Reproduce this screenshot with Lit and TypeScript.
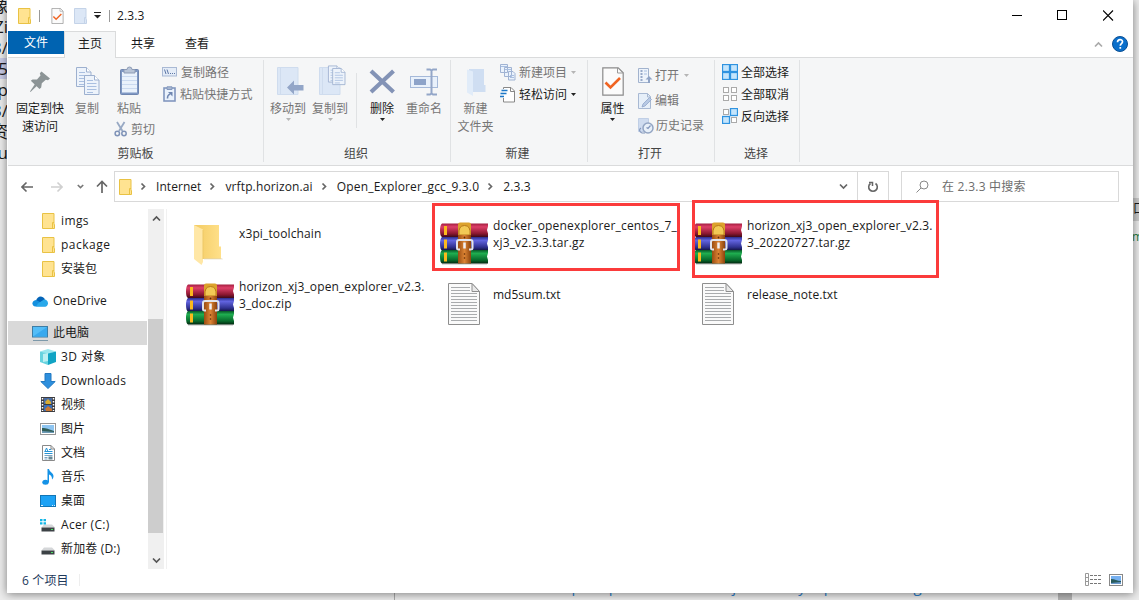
import { LitElement, html, svg, css, type TemplateResult } from "lit";
import { customElement } from "lit/decorators.js";

const icon = (w: number, h: number, body: TemplateResult) =>
  html`<svg width=${w} height=${h} viewBox="0 0 ${w} ${h}" fill="none">${body}</svg>`;

const folder = (w: number, h: number, fill = "#ffe391", edge = "#e9c244") =>
  html`<svg width=${w} height=${h} viewBox="0 0 13 16" fill="none">
    <path d="M.5.5h11.500v11h.5v4H.5z" fill=${fill} stroke=${edge} />
    <path d="M10.500 15.500V9.500h1.500" stroke=${edge} />
  </svg>`;

const caret = (color = "#222") =>
  html`<svg class="caret" width="5" height="3" viewBox="0 0 5 3"><path d="M0 0h5L2.500 3z" fill=${color} /></svg>`;

const chevron = (dir: string, color = "#666") => {
  const d: Record<string, string> = {
    right: "M2.500 1.500 5.500 4.500 2.500 7.500",
    down: "M1 2.500 4.500 6 8 2.500",
    up: "M1 6.500 4.500 3 8 6.500",
  };
  return html`<svg width="9" height="9" viewBox="0 0 9 9"><path d=${d[dir]} fill="none" stroke=${color} stroke-width="1.700" /></svg>`;
};

const pin = icon(32, 32, svg`<g fill="#8c9496"><path d="M17.500 6.500 26 13.500 24 15.200 21.800 14.800 17.800 18.200 17.200 22.500 15.500 24 6.800 15.800 8.500 14.400 13 14.400 16.500 10.500 15.800 8.300z"/><path d="M11.300 18.500 13.300 20.500 6.500 27 6 26.500z"/></g>`);

const sheet = (x: number, y: number) => svg`<g transform="translate(${x} ${y})">
  <path d="M.5.5h10l4.500 4.500v14.500H.5z" fill="#edf3fb" stroke="#9db0cf"/>
  <path d="M10.500.5V5H15" stroke="#9db0cf" fill="#fff"/>
  <path d="M3 5.500h6M3 8.500h9.500M3 11.500h9.500M3 14.500h9.500M3 17.500h6" stroke="#a9bfe0"/></g>`;

const copy = icon(32, 32, svg`${sheet(5, 2)}${sheet(13, 10)}`);
const paste = icon(32, 32, svg`<rect x="7.500" y="4.500" width="18" height="25" rx="1" fill="#7f98c4" stroke="#6f86b0"/>
  <rect x="9" y="7" width="15" height="20.500" fill="#eaf2fc"/><path d="M11 4.500h3a2.500 2.500 0 0 1 5 0H22v3.500H11z" fill="#b9c5d8" stroke="#8d9bb5"/>
  <path d="M9 11.500h15M9 15.500h15M9 19.500h15M9 23.500h15" stroke="#cbdaf0"/>`);
const cut = icon(14, 16, svg`<path d="M3 1l5.500 9M10.500 1 5 10" stroke="#98a9c4" stroke-width="1.800"/><circle cx="3.300" cy="12.500" r="2.200" stroke="#7f93b8" stroke-width="1.500"/><circle cx="10" cy="12.500" r="2.200" stroke="#7f93b8" stroke-width="1.500"/>`);
const pathIcon = icon(15, 10, svg`<rect x=".5" y=".5" width="14" height="8.500" fill="#e4ecf7" stroke="#a9b9d4"/><path d="M2.500 2.500 4 7M5 2.500 6.500 7" stroke="#5d77a6"/><path d="M8 6.500h1M10 6.500h1M12 6.500h1" stroke="#5d77a6"/>`);
const shortcut = icon(13, 16, svg`<rect x="1" y="2" width="11" height="13" fill="#eaf2fc" stroke="#8297be" stroke-width="1.600"/><path d="M4 .8h5v2.700H4z" fill="#aab9d1" stroke="#8297be"/><path d="M4.500 12.500c0-3 .5-3.500 2.500-4.500" stroke="#6f86b0" stroke-width="1.600"/><path d="M5 6h4.500v4.500z" fill="#6f86b0"/>`);

const blueFolder = svg`<path d="M5.500 2.500h20.500v27h-20.500z" fill="#dce7f6" stroke="#cfdcee"/><path d="M8.500 3v26" stroke="#cfdcee"/>`;
const moveTo = icon(32, 32, svg`${blueFolder}<path d="M15 22.500 22 15.500V20h9.500v5.500H22v4z" fill="#93a6c8"/>`);
const copyTo = icon(32, 32, svg`${blueFolder}<g transform="translate(14 .5) scale(.85)">${sheet(0, 0)}${sheet(5, 3)}</g>`);
const remove = icon(32, 32, svg`<path d="M5 6 27.500 27M27.500 6 5 27" stroke="#8393b6" stroke-width="4.200"/>`);
const rename = icon(32, 32, svg`<rect x="2.500" y="11.500" width="27" height="11" fill="#e9f1fb" stroke="#a5b9d9"/><rect x="6" y="14" width="12" height="6" fill="#8da3c9"/><path d="M18.500 4.500h3.500l1.500 1 1.500-1H29M23.500 5v24M18.500 29.500h3.500l1.500-1 1.500 1H29" stroke="#93a6c8" stroke-width="2"/>`);
const newFolder = icon(32, 32, svg`<path d="M9 4h15v16h1.500v7H9z" fill="#cfdef2"/><path d="M7 4.500 13 6.500V31L7 27.500z" fill="#e1ecf9"/>`);
const newItem = icon(16, 17, svg`<g stroke="#a0b3d3" fill="#eaf2fc"><path d="M.5.5h7v8h-7zM4.500 3.500h7v9h-7zM8.500 7.500h4.500l2 2v6.500H8.500z"/></g><path d="M1 2.500h6M5 5.500h6M10 11.500h4M10 13.500h4" stroke="#a9bfe0"/>`);
const easy = icon(16, 17, svg`<path d="M3.500 1.500h7.500l3.500 3.500v11h-11z" fill="#fff"/><path d="M3.500 3V1.500h7.500l3.500 3.500v11h-11V12M10.500 1.500v4h4" stroke="#888"/><path d="M1.500 4.500h6M.5 7.500h6M0 10.500h4" stroke="#1e78c8" stroke-width="1.300"/>`);
const check = (w: number, h: number) => html`<svg width=${w} height=${h} viewBox="0 0 22 29" fill="none"><path d="M.8.8h15.400L21.200 5.800V28.200H.8z" fill="#fbfbfb" stroke="#8b8b8b" stroke-width="1.200"/><path d="M15.500.8V6H21" stroke="#999"/><path d="M3.500 15.500 8.500 20.500 18 11" stroke="#f06422" stroke-width="2.600"/></svg>`;
const openIcon = icon(15, 16, svg`<path d="M.5.5h10v14H.5z" fill="#edf3fb" stroke="#a2b3ce"/><path d="M2.500 3h2M2.500 6h2M2.500 9h2M2.500 12h2" stroke="#7c92b9" stroke-width="1.500"/><path d="M6 3h3M6 6h3" stroke="#a9bfe0"/><path d="M10 15V11.500H7.500L11 8l3.500 3.500H12V15z" fill="#8fa3c6"/>`);
const edit = icon(15, 16, svg`<path d="M.5.5h9l3 3v12H.5z" fill="#e6eff9" stroke="#a8b9d3"/><path d="M9.500.5v3.500h3" stroke="#a8b9d3"/><path d="M4 14l1-3L11.500 4.500 13.500 6.500 7 13z" fill="#b7c9e4" stroke="#91a6ca" stroke-width=".8"/>`);
const history = icon(16, 16, svg`<path d="M.5.5h10v13H.5z" fill="#cfdcf0" stroke="#c0cfe6"/><circle cx="10" cy="10" r="5" fill="#e8f0f9" stroke="#93a5c3" stroke-width="1.500"/><path d="M12.500 7.500 10 10.500 8.500 9.500M3 10c-2 1-2 4 1 5h3" stroke="#8095bc" stroke-width="1.200"/>`);

const tile = (x: number, y: number, on: boolean, s = 6) =>
  svg`<rect x=${x + 0.5} y=${y + 0.5} width=${s - 1} height=${s - 1} fill=${on ? "#c5e5fc" : "#fff"} stroke=${on ? "#2f93e0" : "#aaa"} stroke-width=${on ? 1.300 : 1}/>`;
const selAll = icon(16, 16, svg`${tile(0, 0, true, 8)}${tile(8, 0, true, 8)}${tile(0, 8, true, 8)}${tile(8, 8, true, 8)}`);
const selNone = icon(16, 16, svg`${tile(1, 1, false)}${tile(9, 1, false)}${tile(1, 9, false)}${tile(9, 9, false)}`);
const selInv = icon(16, 16, svg`${tile(1, 1, false)}${tile(8, 0, true, 8)}${tile(0, 8, true, 8)}${tile(9, 9, false)}`);

const cloud = icon(17, 12, svg`<path d="M4 6C5 1.500 10-.5 13 4.500L8 8z" fill="#0364b8"/><path d="M3.500 11.500C-.8 11-.5 5.500 4 5l6 3 4 3.500z" fill="#1490df"/><path d="M6 8.500 12 4.500c4-.5 5.500 5 2 7H4z" fill="#28a8ea"/>`);
const pc = icon(16, 16, svg`<rect x=".5" y="1.500" width="15" height="10.500" fill="#54bdf7" stroke="#3d7da5"/><path d="M1 11.500 15 2v9.500z" fill="#38a9ee"/><path d="M1 15.500h15" stroke="#7d99aa"/>`);
const cube = icon(16, 16, svg`<path d="M0 2.500 8 0l8 2.500L8 5z" fill="#9be7ee"/><path d="M0 2.500 8 4.500V16L0 13z" fill="#67d3df"/><path d="M8 4.500l8-2V13L8 16z" fill="#11a4c4"/><path d="M3 5 8 4v8l-5 1z" fill="#bdf0f2"/>`);
const down = icon(16, 16, svg`<path d="M5 .5h6v8h4.200L8 15.500.8 8.500H5z" fill="#2d8fdd" stroke="#2379c2"/>`);
const film = icon(14, 16, svg`<path d="M0 0h14v15H0z" fill="#3c3c40"/><path d="M3 1h8v6H3z" fill="#486ca4"/><path d="M3 8h8v6H3z" fill="#356ebc"/><path d="M4 5l3-3 3 3v2H5z" fill="#d9ac32"/><path d="M4 12l3-3 4 3v2H5z" fill="#c77734"/><path d="M1.500 1v13M12.500 1v13" stroke="#fff" stroke-width="1.500" stroke-dasharray="1.500 1.500"/>`);
const photo = icon(16, 12, svg`<rect x=".5" y=".5" width="15" height="11" fill="#fff" stroke="#969696"/><path d="M2 2h12v8H2z" fill="#8ec5f1"/><path d="M2 5c5 0 6 1 12 3v2H2z" fill="#315e58"/><path d="M2 8l12 1v1H2z" fill="#6d9bb6"/>`);
const doc = icon(13, 16, svg`<path d="M.5.5h8.500l3.500 3.500v11.500H.5z" fill="#fff" stroke="#898989"/><path d="M9 .5V4h3.500" stroke="#898989"/><path d="M3 6.500 4.500 3l1.500 3.500M7 4.500h2M2.500 6.500h8M2.500 8.500h8" stroke="#2794d5"/><path d="M2.500 10.500h8M2.500 12.500h3M2.500 14h3" stroke="#7ba4c2"/><path d="M6.500 11.500h4v3h-4z" fill="#668896"/>`);
const music = icon(12, 16, svg`<ellipse cx="3.500" cy="13.300" rx="3.200" ry="2.500" fill="#1592e6"/><path d="M5.500 13V0h1.500c.5 3 4.500 4 4.500 7 0 1.500-.5 2.500-1.500 3.500 .3-3-1.500-4.500-3-5v8z" fill="#1592e6"/>`);
const desktop = icon(16, 12, svg`<rect x=".5" y=".5" width="15" height="11" fill="#1ca2f5" stroke="#1275b5"/><path d="M1 10.500h2M12 10.500h1M14 10.500h1" stroke="#d8f0ff"/>`);
const disk = svg`<path d="M1.500 8.500 4 5.500h8l3 3z" fill="#d5d7d9"/><path d="M1.500 8.500h13v4h-13z" fill="#3d4246"/><path d="M11 10.500h2" stroke="#4ade62"/>`;
const driveC = icon(16, 14, svg`<g transform="translate(0 1)">${disk}</g><path d="M0 1h2.500v2.300H0zM3.500 1h2.500v2.300H3.500zM0 4.200h2.500v2.300H0zM3.500 4.200h2.500v2.300H3.500z" fill="#12b5e6"/>`);
const driveD = icon(16, 14, svg`${disk}`);

const bigFolder = icon(48, 48, svg`<defs><linearGradient id="f" x2="1"><stop stop-color="#f3cb62"/><stop offset="1" stop-color="#ffe08a"/></linearGradient></defs>
  <path d="M8 6h25v21.500h2V40H8z" fill="url(#f)"/><path d="M8 6 17 10.500V43l-1.500 3L8 40z" fill="#ffe7a6"/><path d="M17 11v29" stroke="#edc866"/><path d="M18 40.500h19l-1-1.500H18z" fill="#ddd0ac" opacity=".5"/>`);
const textFile = icon(32, 42, svg`<path d="M.5.5h23.500l7.500 8v33H.5z" fill="#fafafa" stroke="#8e8e8e"/><path d="M24 .5V8.500h7.500z" fill="#e9e9e9" stroke="#8e8e8e"/>
  <path d="M3 4.500h19M3 7.500h19M3 10.500h26M3 13.500h26M3 16.500h26M3 19.500h26M3 22.500h26M3 25.500h26M3 28.500h26M3 31.500h26M3 34.500h26M3 37.500h26" stroke="#a9abad"/>`);

const book = (y: number, id: string) => svg`<path d="M2 ${y}h46v3l-1 3.500 1 3.500v3.500H2q-2-1-2-6.500t2-7z" fill="url(#${id})"/>
  <path d="M4 ${y + 2.5}h3v9H4z" fill="#fbb91d"/>`;
const grad = (id: string, a: string, b: string, c: string, d: string) =>
  svg`<linearGradient id=${id} x2="0" y2="1"><stop stop-color=${a}/><stop offset=".25" stop-color=${b}/><stop offset=".75" stop-color=${c}/><stop offset="1" stop-color=${d}/></linearGradient>`;
const winrar = icon(48, 43, svg`<defs>${grad("r", "#a31e40", "#dd3f68", "#8a1730", "#3c0a18")}${grad("b", "#2b2c8c", "#6264e0", "#30318f", "#11123e")}${grad("g", "#075727", "#1fae50", "#07692b", "#02260f")}
  <linearGradient id="l" x2="1"><stop stop-color="#9a4d12"/><stop offset=".5" stop-color="#dc8434"/><stop offset="1" stop-color="#8b430d"/></linearGradient></defs>
  <path d="M2 42h45" stroke="#bbb"/>${book(1.5, "r")}${book(15, "b")}${book(28, "g")}
  <path d="M18 2.500q0-2 2-2h9q2 0 2 2v11H18z" fill="#dca22c"/><path d="M19 13q-1-9.500 5.500-9.500T30 13z" fill="#f2c955" stroke="#b87819"/>
  <path d="M18 13h13v28.500H18z" fill="url(#l)"/><circle cx="24.500" cy="15.500" r=".9" fill="#5b2a07"/><circle cx="24.500" cy="32" r=".8" fill="#5b2a07"/><circle cx="24.500" cy="36" r=".8" fill="#5b2a07"/>
  <path d="M19 18h11.500q2 0 2 2v6q0 1.500-2 1.500H29M20 27.500h-1.500q-1.500 0-1.500-1.500v-6q0-2 2-2" stroke="#e2e4ea" stroke-width="2"/><path d="M24.500 20.500v6" stroke="#f0f0f4" stroke-width="2.500"/>`);

/* label with optional tracking, in px */
const t = (s: string, track = 0) => html`<span class="t" style="letter-spacing:${track}px">${s}</span>`;

@customElement("app-root")
export class AppRoot extends LitElement {
  static styles = css`
    :host { display: block; position: relative; width: 1139px; height: 600px; overflow: hidden; background: #ececec;
      font: 12px/17px "Open Sans", "Noto Sans CJK SC", sans-serif; color: #1a1a1a; }
    * { box-sizing: border-box; }
    svg { display: block; flex: none; }
    .t { white-space: nowrap; }
    .behind { position: absolute; inset: 0; font-size: 17px; line-height: 21px; }
    .left { position: absolute; left: -11px; top: -5px; width: 19px; }
    .left div { height: 21px; white-space: nowrap; display: flex; justify-content: flex-end; }
    .left .hl { background: #c9cce8; }
    .right { position: absolute; right: 0; top: 198px; width: 6px; height: 23px; background: #c9c9c9; overflow: hidden; font-size: 12px; }
    .green { position: absolute; right: -4px; top: 226px; font-size: 12px; color: #237a3b; }
    .below { position: absolute; left: 394px; top: 593px; right: 67px; height: 7px; border-left: 1px solid #aaa; border-right: 14px solid #b5b5b5; overflow: hidden; }
    .below span { display: block; margin: -17px 0 0 153px; letter-spacing: 1.200px; color: #2d80cd; font-size: 15px; white-space: nowrap; }
    .win { position: relative; margin-left: 7px; width: 1126px; height: 593px; background: #fff; display: flex; flex-direction: column; box-shadow: 0 1px 9px rgba(0,0,0,.48); padding-left: 1px; }
    .title { height: 31px; display: flex; align-items: center; padding-left: 10px; flex: none; }
    .quick { display: flex; align-items: center; height: 31px; }
    .vb { width: 1px; height: 12px; background: #999; }
    .v1 { margin: 0 11px 0 8px; }
    .qf { margin: 0 7px 0 10px; }
    .qd { margin-right: 8px; }
    .name { margin-left: 7px; }
    .caps { margin-left: auto; display: flex; gap: 35px; padding-right: 19px; }
    .tabs { display: flex; height: 26px; flex: none; }
    .tab { display: grid; place-items: center; height: 26px; width: 54px; padding-bottom: 2px; }
    .file { width: 56px; height: 23px; background: #0063b1; color: #fff; padding: 0; }
    .home { width: 52px; border: 1px solid #dadbdc; border-bottom: 0; background: #f5f6f7; height: 27px; z-index: 1; padding-bottom: 3px; }
    .help { margin-left: auto; display: flex; align-items: center; gap: 9px; padding-right: 5px; }
    .ribbon { height: 109px; flex: none; display: flex; background: #f5f6f7; border: solid #dadbdc; border-width: 1px 0; }
    .group { height: 102px; margin-top: 2px; border-right: 1px solid #e0e2e4; display: flex; flex-direction: column; justify-content: space-between; }
    .body { display: flex; height: 84px; }
    .cap { text-align: center; color: #444; line-height: 18px; height: 17px; }
    .big { display: flex; flex-direction: column; align-items: center; padding-top: 5px; white-space: nowrap; height: 84px; }
    .big .lab { text-align: center; line-height: 18px; margin-top: 3px; }
    .dim { color: #757575; }
    .row { display: flex; align-items: center; height: 22px; gap: 4px; }
    .row .caret { margin-left: 1px; }
    .g1 { width: 256px; } .g2 { width: 187px; padding-right: 2px; } .g3 { width: 137px; padding-right: 3px; } .g4 { width: 127px; padding-right: 2px; } .g5 { width: 85px; padding-right: 2px; }
    .w64 { width: 64px; } .w30 { width: 30px; } .w49 { width: 49px; } .w42 { width: 42px; }
    .pastecol { width: 54px; } .pastecol .big { height: 58px; } .pastecol .row { padding-left: 12px; gap: 3px; margin-right: -8px; }
    .side { padding: 1px 0 0 0; }
    .paths { padding-left: 6px; }
    .shift { padding-left: 1px; }
    .g3 .row { gap: 3px; } .g5 .row { gap: 3px; }
    .g2 .body { padding-left: 3px; } .g5 .body { padding-left: 7px; } .props { padding: 2px 0 1px; }
    .bar { display: flex; align-items: center; height: 41px; flex: none; padding-left: 13px; }
    .fwd { margin-left: 18px; } .recent { margin: 0 12px 0 14px; }
    .addr { display: flex; align-items: center; width: 775px; height: 31px; border: 1px solid #d9d9d9; margin-left: 6px; padding-left: 4px; }
    .crumb { display: flex; align-items: center; padding-bottom: 1px; }
    .crumb .c { margin: 1px 8px 0 7px; }
    .drop { margin-left: auto; display: flex; height: 29px; align-items: center; }
    .refresh { width: 31px; height: 29px; border-left: 1px solid #d9d9d9; display: grid; place-items: center; margin-left: 9px; }
    .search { display: flex; align-items: center; width: 218px; height: 31px; border: 1px solid #d9d9d9; margin-left: 12px; padding-left: 14px; gap: 13px; color: #6d6d6d; }
    .main { display: flex; flex: none; height: 362px; padding-top: 2px; }
    .nav { width: 139px; height: 360px; overflow: hidden; }
    .item { display: flex; align-items: center; height: 24px; padding-left: 31px; }
    .item .t { margin-top: -2px; }
    .item.top { padding-left: 23px; }
    .item.sp { margin-top: 8px; }
    .item.on { background: #d9d9d9; }
    .ic { width: 22px; display: flex; justify-content: center; flex: none; padding-right: 4px; }
    .scroll { width: 16px; margin-left: 1px; background: #f0f0f0; display: flex; flex-direction: column; align-items: center; padding: 5px 0 4px; height: 360px; }
    .thumb { width: 15px; align-self: flex-start; height: 214px; background: #cdcdcd; margin-top: 96px; margin-bottom: auto; }
    .edge { width: 1px; background: #f1f1f1; margin-left: 2px; }
    .files { display: grid; grid-template-columns: repeat(3, 254px); grid-auto-rows: 61px; padding: 9px 0 0 19px; height: 140px; }
    .cell { display: flex; height: 48px; }
    .pic { width: 48px; height: 50px; display: flex; align-items: center; justify-content: center; flex: none; }
    .fn { margin-left: 5px; height: 34px; margin-top: -1px; display: flex; flex-direction: column; justify-content: center; }
    .fn.one { margin-top: -2px; }
    .status { display: flex; align-items: center; height: 22px; padding: 0 10px 0 14px; color: #1e395b; }
    .status .div { width: 1px; height: 12px; background: #eee; margin-left: 10px; }
    .views { margin-left: auto; display: flex; gap: 7px; align-items: center; margin-top: -1px; }
    .mark { position: absolute; border: 3px solid #fb3b3b; }
    .m1 { left: 432px; top: 203px; width: 248px; height: 68px; }
    .m2 { left: 692px; top: 200px; width: 247px; height: 78px; }
    .o4 { padding: 3px 0 0 1px; } .o4 .row { height: 25px; gap: 2px; } .o4 .row.dim:last-child { margin-left: 0; }
    .o4 .row .caret { margin-left: 3px; }
    .sepv { width: 1px; height: 55px; background: #e0e2e4; margin: 13px 4px 0 5px; }
  `;

  big(ic: TemplateResult, lines: string[], cls: string, arrow?: string) {
    return html`<div class="big ${cls}">${ic}<div class="lab">${lines.map((l) => html`<div>${l}</div>`)}</div>${arrow ? caret(arrow) : ""}</div>`;
  }
  row(ic: TemplateResult, text: string, dim = false, arrow?: string) {
    return html`<div class="row ${dim ? "dim" : ""}">${ic}<span class="t">${text}</span>${arrow ? caret(arrow) : ""}</div>`;
  }
  nav(ic: TemplateResult, text: string, cls = "", track = 0) {
    return html`<div class="item ${cls}"><span class="ic">${ic}</span>${t(text, track)}</div>`;
  }
  cell(ic: TemplateResult, lines: string[], track = 0) {
    return html`<div class="cell"><div class="pic">${ic}</div><div class="fn ${lines.length === 1 ? "one" : ""}">${lines.map((l) => t(l, track))}</div></div>`;
  }
  crumb(text: string, track = 0) {
    return html`<div class="crumb"><span class="c">${chevron("right")}</span>${t(text, track)}</div>`;
  }

  render() {
    return html`
      <div class="behind">
        <div class="left"><div>像</div><div>Zi</div><div>3/</div><div class="hl">5</div><div>tp</div><div>3/</div><div>资</div><div>u</div></div>
        <div class="right">口</div><div class="green">m</div>
        <div class="below"><span>https://pan.horizon.ai/j3/survey/open.training</span></div>
      </div>
      <div class="win">
        <div class="title">
          <div class="quick">${folder(13, 16)}<span class="vb v1"></span>${check(13, 16)}
            <span class="qf">${folder(13, 16, "#dce7f6", "#c4d3e8")}</span>
            <svg class="qd" width="7" height="7" viewBox="0 0 7 7"><path d="M0 .5h7" stroke="#222"/><path d="M0 3h7L3.500 6.500z" fill="#222"/></svg>
            <span class="vb"></span></div>
          <span class="name">${t("2.3.3", 0.1)}</span>
          <div class="caps">
            ${icon(11, 11, svg`<path d="M1 5.500h10" stroke="#000"/>`)}
            ${icon(11, 11, svg`<rect x=".5" y=".5" width="9" height="9" stroke="#000"/>`)}
            ${icon(11, 11, svg`<path d="M0 .5l10 10M10 .5l-10 10" stroke="#000" stroke-width="1.100"/>`)}
          </div>
        </div>
        <div class="tabs">
          <div class="tab file">文件</div><div class="tab home">主页</div><div class="tab">共享</div><div class="tab">查看</div>
          <div class="help">${chevron("up", "#aaa")}<svg width="16" height="16" viewBox="0 0 16 16"><circle cx="8" cy="8" r="7.500" fill="#0a6fcb" stroke="#0a4f94"/><path d="M5.500 6.300c.1-3.500 5-3.300 5-.6 0 1.800-2.200 1.900-2.200 4M8.300 11v1.800" fill="none" stroke="#fff" stroke-width="1.700"/></svg></div>
        </div>
        <div class="ribbon">
          <div class="group g1"><div class="body">
            ${this.big(pin, ["固定到快", "速访问"], "w64")}
            ${this.big(copy, ["复制"], "w30 dim")}
            <div class="pastecol">${this.big(paste, ["粘贴"], "dim")}${this.row(cut, "剪切", true)}</div>
            <div class="side paths"><div class="row dim">${pathIcon}${t("复制路径")}</div><div class="row dim shift">${shortcut}${t("粘贴快捷方式", 0.1)}</div></div>
          </div><div class="cap">剪贴板</div></div>
          <div class="group g2"><div class="body">
            ${this.big(moveTo, ["移动到"], "w42 dim", "#b5b5b5")}
            ${this.big(copyTo, ["复制到"], "w42 dim", "#b5b5b5")}
            <div class="sepv"></div>
            ${this.big(remove, ["删除"], "w42", "#222")}
            ${this.big(rename, ["重命名"], "w42 dim")}
          </div><div class="cap">组织</div></div>
          <div class="group g3"><div class="body">
            ${this.big(newFolder, ["新建", "文件夹"], "w49 dim")}
            <div class="side">${this.row(newItem, "新建项目", true, "#b5b5b5")}${this.row(easy, "轻松访问", false, "#222")}</div>
          </div><div class="cap">新建</div></div>
          <div class="group g4"><div class="body">
            ${this.big(html`<div class="props">${check(22, 29)}</div>`, ["属性"], "w49", "#222")}
            <div class="o4">${this.row(openIcon, "打开", true, "#b5b5b5")}${this.row(edit, "编辑", true)}${this.row(history, "历史记录", true)}</div>
          </div><div class="cap">打开</div></div>
          <div class="group g5"><div class="body">
            <div class="side">${this.row(selAll, "全部选择")}${this.row(selNone, "全部取消")}${this.row(selInv, "反向选择")}</div>
          </div><div class="cap">选择</div></div>
        </div>
        <div class="bar">
          ${icon(12, 12, svg`<path d="M12 6H1M5.500 1.500 1 6l4.500 4.500" stroke="#666" stroke-width="1.600"/>`)}
          <span class="fwd">${icon(12, 12, svg`<path d="M0 6h11M6.500 1.500 11 6l-4.500 4.500" stroke="#d0d0d0" stroke-width="1.600"/>`)}</span>
          <span class="recent"><svg width="7" height="7" viewBox="0 0 9 9"><path d="M1 2.500 4.500 6 8 2.500" fill="none" stroke="#777" stroke-width="2"/></svg></span>
          ${icon(12, 13, svg`<path d="M6 13V1.500M1 6.500l5-5 5 5" stroke="#666" stroke-width="1.700"/>`)}
          <div class="addr">${folder(13, 16)}
            ${this.crumb("Internet", 0.05)}${this.crumb("vrftp.horizon.ai", 0.13)}${this.crumb("Open_Explorer_gcc_9.3.0", 0.17)}${this.crumb("2.3.3", 0.1)}
            <div class="drop">${chevron("down")}<div class="refresh">${icon(12, 12, svg`<path d="M8.500 2.500A4.300 4.300 0 1 1 3.500 2.500" stroke="#666" stroke-width="1.600"/><path d="M2 1.500h3.500V5" stroke="#666" stroke-width="1.500"/>`)}</div></div>
          </div>
          <div class="search">${icon(13, 13, svg`<circle cx="8" cy="5" r="4" stroke="#888"/><path d="M5 8 .5 12.500" stroke="#888"/>`)}${t("在 2.3.3 中搜索", 0.25)}</div>
        </div>
        <div class="main">
          <div class="nav">
            ${this.nav(folder(13, 16), "imgs", "", 0.4)}${this.nav(folder(13, 16), "package", "", 0.5)}${this.nav(folder(13, 16), "安装包")}
            ${this.nav(cloud, "OneDrive", "top sp", 0.15)}${this.nav(pc, "此电脑", "top sp on")}
            ${this.nav(cube, "3D 对象", "", 0.4)}${this.nav(down, "Downloads", "", 0.3)}${this.nav(film, "视频")}${this.nav(photo, "图片")}${this.nav(doc, "文档")}
            ${this.nav(music, "音乐")}${this.nav(desktop, "桌面")}${this.nav(driveC, "Acer (C:)", "", 0.3)}${this.nav(driveD, "新加卷 (D:)", "", 0.15)}
          </div>
          <div class="scroll">${chevron("up", "#555")}<div class="thumb"></div>${chevron("down", "#555")}</div>
          <div class="edge"></div>
          <div class="files">
            ${this.cell(bigFolder, ["x3pi_toolchain"], 0.13)}
            ${this.cell(winrar, ["docker_openexplorer_centos_7_", "xj3_v2.3.3.tar.gz"], 0.17)}
            ${this.cell(winrar, ["horizon_xj3_open_explorer_v2.3.", "3_20220727.tar.gz"], 0.12)}
            ${this.cell(winrar, ["horizon_xj3_open_explorer_v2.3.", "3_doc.zip"], 0.12)}
            ${this.cell(textFile, ["md5sum.txt"])}
            ${this.cell(textFile, ["release_note.txt"], 0.07)}
          </div>
        </div>
        <div class="status">${t("6 个项目", 0.15)}<span class="div"></span>
          <div class="views">
            ${icon(17, 13, svg`<path d="M.5.5h3v12h-3zM.5 4.500h3M.5 8.500h3" stroke="#999"/><path d="M5 2.500h3M9 2.500h3M13 2.500h3M5 6.500h3M9 6.500h3M13 6.500h3M5 10.500h3M9 10.500h3M13 10.500h3" stroke="#777"/>`)}
            ${icon(14, 12, svg`<rect x=".5" y=".5" width="13" height="11" fill="#fff" stroke="#888"/><path d="M2 2h10v8H2z" fill="#76b0f0"/><path d="M2 5c4 0 6 2 10 2v3H2z" fill="#285b5c"/><path d="M2 9l10-1v2H2z" fill="#6a98ca"/>`)}
          </div>
        </div>
      </div>
      <div class="mark m1"></div><div class="mark m2"></div>
    `;
  }
}
